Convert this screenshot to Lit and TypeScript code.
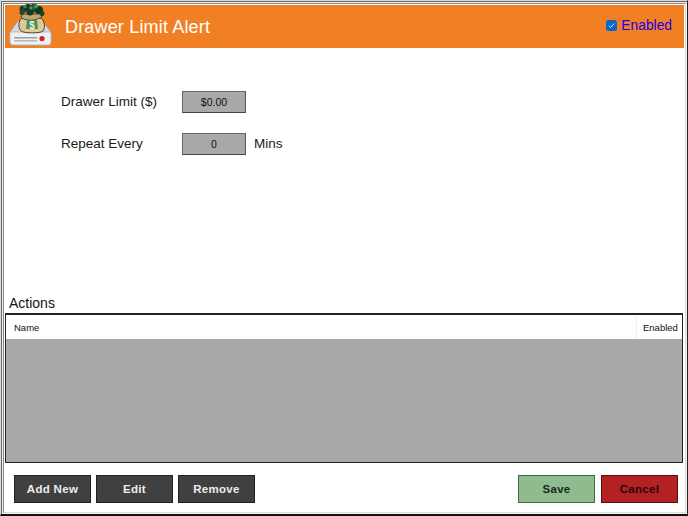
import { LitElement, html, css, svg } from "lit";
import { customElement } from "lit/decorators.js";

const icon = svg`<svg class="logo" width="44" height="44" viewBox="0 0 44 44">
  <path d="M9 18 L33 18 L42 29 L42 39 Q42 42 39 42 L4 42 Q1 42 1 39 L1 29 Z" fill="#d5d8dc" stroke="#9da1a6" stroke-width=".8"/>
  <path d="M1 29 L42 29 L42 39 Q42 42 39 42 L4 42 Q1 42 1 39 Z" fill="#eff0f2" stroke="#aeb1b5" stroke-width=".8"/>
  <rect x="5" y="34" width="23" height="1.500" fill="#9a9ea3"/>
  <rect x="5" y="37" width="23" height="1.500" fill="#b4b7bb"/>
  <circle cx="33" cy="35.500" r="2.600" fill="#d3202f"/>
  <path d="M13 15 C9 18 9 25 12 28 C15 30.500 32 30.500 34 28 C37 24 35 17 32 15 Z" fill="#dccb98" stroke="#3d3320" stroke-width=".9"/>
  <path d="M12 15 Q22 20 33 14 L32 11 L13 11 Z" fill="#bca970" stroke="#3d3320" stroke-width=".8"/>
  <path d="M18 17 L28 17 L29 26 L17 26 Z" fill="#4c8f5c"/>
  <text x="23" y="25.500" font-size="10" font-weight="700" text-anchor="middle" font-family="Liberation Sans" fill="#eef5cf">$</text>
  <circle cx="14" cy="6" r="3.500" fill="#17422c"/><circle cx="19" cy="5" r="4" fill="#143a27"/><circle cx="25" cy="5" r="4.500" fill="#1f5a39"/><circle cx="30" cy="7" r="4" fill="#123524"/><circle cx="21" cy="9" r="3.500" fill="#143a27"/><circle cx="16" cy="3.500" r="1.800" fill="#3c7d57"/><circle cx="27" cy="3.500" r="2" fill="#4b8d66"/><circle cx="13" cy="9.500" r="2.500" fill="#1c4d33"/><circle cx="33" cy="10.500" r="2.500" fill="#17422c"/><circle cx="22" cy="5" r="1.500" fill="#5b9a74"/>
</svg>`;

@customElement("app-root")
export class AppRoot extends LitElement {
  static styles = css`
    :host { display: block; width: 688px; height: 516px; font-family: "Liberation Sans", Arial, sans-serif; color: #1a1a1a; overflow: hidden; }
    .frame { box-sizing: border-box; width: 688px; height: 516px; background: #f0f0f0; border-style: solid; border-width: 1px 1px 2px 1px; border-color: #dcdcdc #222 #111 #dcdcdc; box-shadow: inset 1px 1px 0 #666; padding: 2px 1px 0 2px; }
    .inner { box-sizing: border-box; height: 510px; border: 1px solid #888; border-right-color: #ddd; border-bottom-color: #ddd; background: #fff; padding: 1px 1px 0 1px; display: flex; flex-direction: column; }
    .head { height: 43px; flex: none; background: #f17f24; display: flex; align-items: center; color: #fff; position: relative; }
    .logo { position: absolute; left: 4px; top: -2px; }
    .title { margin-left: 60px; font-size: 18px; letter-spacing: 0.170px; padding-top: 1px; }
    .enabled { margin-left: auto; margin-right: 12px; display: flex; align-items: center; gap: 4px; color: #2200e8; font-size: 13.800px; padding-bottom: 2px; }
    .check { width: 11px; height: 11px; border-radius: 2.500px; background: #0a66c8; display: flex; }
    .form { flex: none; height: 243px; padding: 43px 0 0 56px; box-sizing: border-box; display: flex; flex-direction: column; gap: 20px; font-size: 13.500px; }
    .row { display: flex; align-items: center; height: 22px; }
    .row span, .row label { position: relative; top: -1px; }
    .row label { width: 121px; }
    .field { box-sizing: border-box; width: 64px; height: 22px; background: #a9a9a9; border: 1px solid #555; border-color: #666 #555 #444 #666; font-size: 10.500px; display: flex; align-items: center; justify-content: center; color: #111; }
    .unit { margin-left: 8px; }
    .actions-label { font-size: 14px; height: 22px; line-height: 25px; padding-left: 4px; flex: none; color: #111; }
    .table { box-sizing: border-box; flex: none; height: 150px; margin-right: 1px; border: 1px solid #222; border-top-width: 2px; background: #a9a9a9; display: flex; flex-direction: column; }
    .thead { height: 24px; background: #fff; display: flex; font-size: 9.500px; align-items: stretch; color: #111; }
    .thead .name { flex: 1; padding-left: 8px; display: flex; align-items: center; }
    .thead .en { width: 46px; border-left: 1px solid #eee; display: flex; align-items: center; padding-left: 6px; box-sizing: border-box; }
    .buttons { display: flex; gap: 5px; padding: 12px 6px 0 9px; }
    .btn { box-sizing: border-box; width: 77px; height: 28px; font-size: 11.500px; font-weight: 700; display: flex; align-items: center; justify-content: center; letter-spacing: 0.300px; border: 1px solid #222; }
    .dark { background: #404040; color: #eee; }
    .spacer { flex: 1; }
    .save { background: #8fbc8f; color: #1a2a1a; border-color: #3d6b3d; margin-right: 1px; }
    .cancel { background: #b22222; color: #2a0808; border-color: #5a1010; }
  `;
  render() {
    return html`<div class="frame"><div class="inner">
      <div class="head">
        ${icon}
        <div class="title">Drawer Limit Alert</div>
        <div class="enabled"><span class="check"><svg width="11" height="11" viewBox="0 0 11 11"><path d="M2.800 5.800 L4.600 7.500 L8.200 3.500" fill="none" stroke="#cfe2f7" stroke-width="1"/></svg></span>Enabled</div>
      </div>
      <div class="form">
        <div class="row"><label>Drawer Limit ($)</label><div class="field">$0.00</div></div>
        <div class="row"><label>Repeat Every</label><div class="field">0</div><span class="unit">Mins</span></div>
      </div>
      <div class="actions-label">Actions</div>
      <div class="table"><div class="thead"><div class="name">Name</div><div class="en">Enabled</div></div></div>
      <div class="buttons">
        <div class="btn dark">Add New</div><div class="btn dark">Edit</div><div class="btn dark">Remove</div>
        <div class="spacer"></div>
        <div class="btn save">Save</div><div class="btn cancel">Cancel</div>
      </div>
    </div></div>`;
  }
}
